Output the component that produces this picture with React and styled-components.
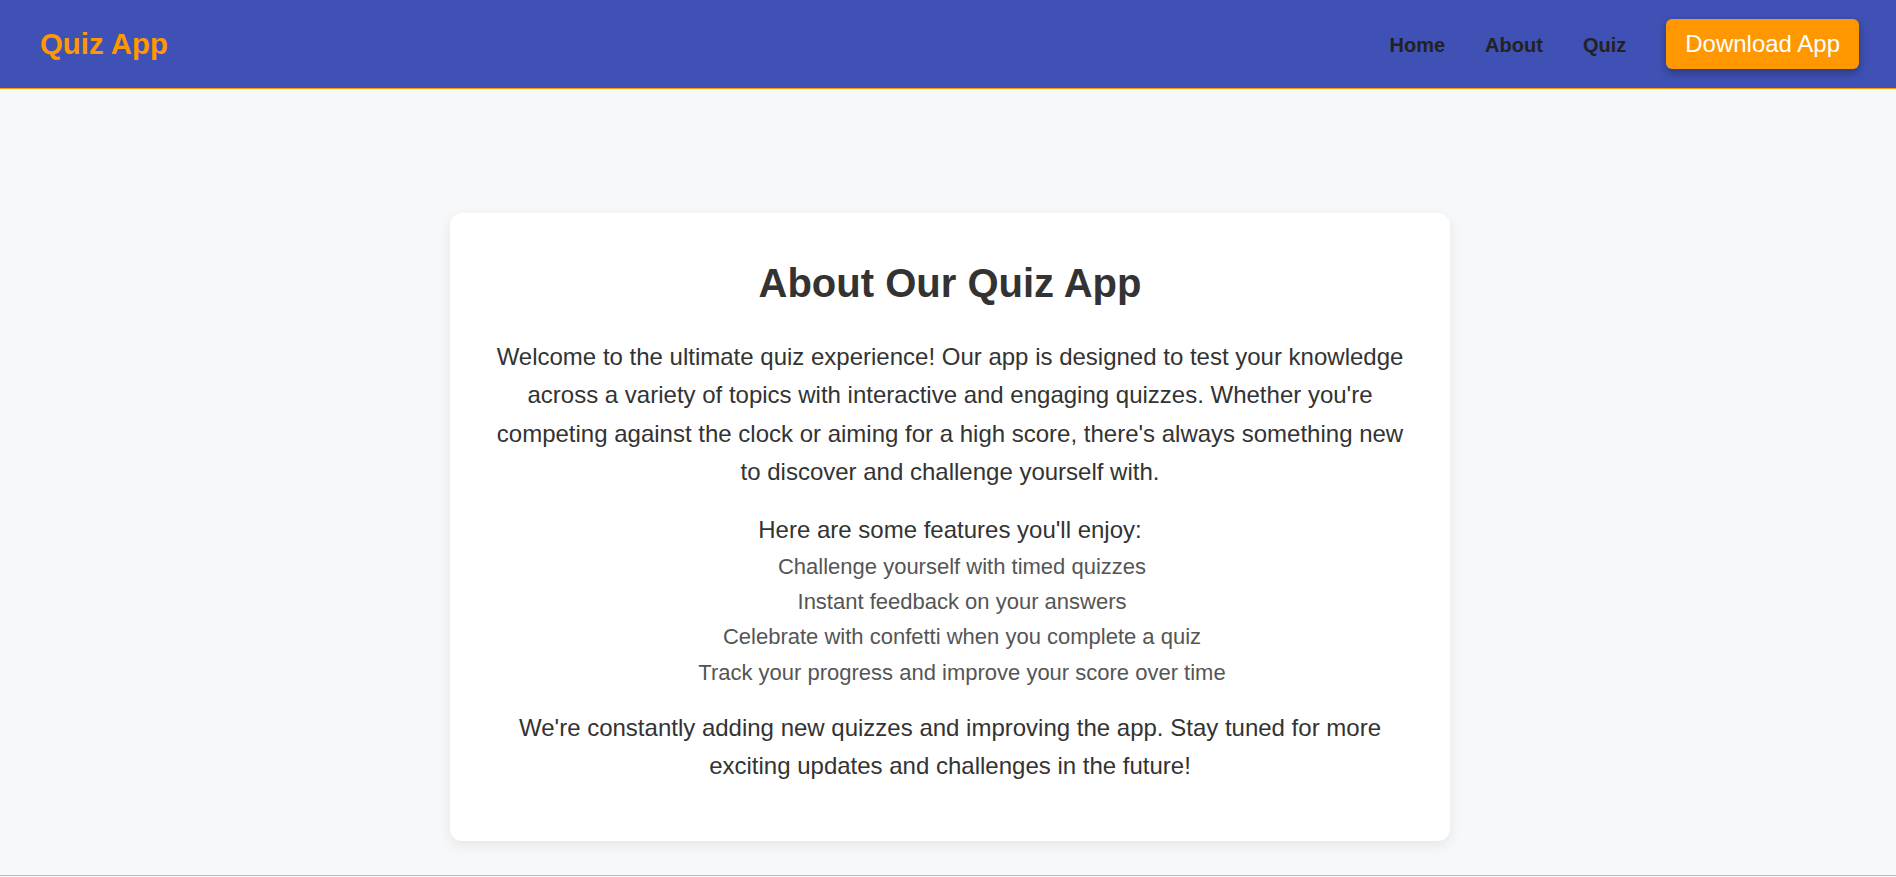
import React from "react";
import styled, {createGlobalStyle} from "styled-components";

const GlobalStyle = createGlobalStyle`
    * {
        box-sizing: border-box;
    }
    body {
        margin: 0;
        background: #f7f8fa;
        font-family: "Liberation Sans", Arial, sans-serif;
        color: #333;
    }
`;

const Header = styled.header`
    height: 89px;
    display: flex;
    align-items: center;
    justify-content: space-between;
    padding: 0 37px 0 40px;
    background: #3f51b5;
    border-bottom: 1px solid #ff9800;
`;
const Logo = styled.div`
    font-size: 29.4px;
    font-weight: 700;
    color: #ff9800;
`;
const Nav = styled.nav`
    display: flex;
    align-items: baseline;
    gap: 40px;
`;
const NavLink = styled.a`
    font-size: 20px;
    font-weight: 700;
    color: #222;
    text-decoration: none;
    cursor: pointer;
`;
const DownloadButton = styled.button`
    font-family: inherit;
    font-size: 24px;
    line-height: 1.15;
    color: #fff;
    background: #ff9800;
    border: none;
    border-radius: 6px;
    padding: 11px 19px;
    box-shadow: 0 4px 10px rgba(0, 0, 0, 0.3);
    cursor: pointer;
`;

const Main = styled.main`
    padding: 124px 0 34px 4px;
`;
const Card = styled.section`
    width: 1000px;
    margin: 0 auto;
    background: #fff;
    border-radius: 12px;
    box-shadow: 0 4px 14px rgba(0, 0, 0, 0.08);
    padding: 48px 40px 56px;
    text-align: center;
`;
const Title = styled.h2`
    margin: 0 0 32px;
    font-size: 40px;
    font-weight: 700;
    color: #333;
`;
const Text = styled.p`
    margin: 0 0 ${(p) => p.$gap || 0}px;
    font-size: 24px;
    line-height: 1.6;
    color: #333;
`;
const FeatureList = styled.ul`
    list-style: none;
    margin: 0 0 19px;
    padding: 0 0 0 24px;
`;
const Feature = styled.li`
    font-size: 22px;
    line-height: 1.6;
    color: #555;
`;
const Footer = styled.footer`
    border-top: 1px solid #bbb;
    height: 60px;
`;

const features = [
    "Challenge yourself with timed quizzes",
    "Instant feedback on your answers",
    "Celebrate with confetti when you complete a quiz",
    "Track your progress and improve your score over time",
];

function App() {
    return <>
        <GlobalStyle/>
        <Header>
            <Logo>Quiz App</Logo>
            <Nav>
                <NavLink>Home</NavLink>
                <NavLink>About</NavLink>
                <NavLink>Quiz</NavLink>
                <DownloadButton>Download App</DownloadButton>
            </Nav>
        </Header>
        <Main>
            <Card>
                <Title>About Our Quiz App</Title>
                <Text $gap={19}>
                    Welcome to the ultimate quiz experience! Our app is designed to test your knowledge
                    across a variety of topics with interactive and engaging quizzes. Whether you're
                    competing against the clock or aiming for a high score, there's always something new
                    to discover and challenge yourself with.
                </Text>
                <Text>Here are some features you'll enjoy:</Text>
                <FeatureList>
                    {features.map((el) => (<Feature key={el}>{el}</Feature>))}
                </FeatureList>
                <Text>
                    We're constantly adding new quizzes and improving the app. Stay tuned for more
                    exciting updates and challenges in the future!
                </Text>
            </Card>
        </Main>
        <Footer/>
    </>
}

export default App;
